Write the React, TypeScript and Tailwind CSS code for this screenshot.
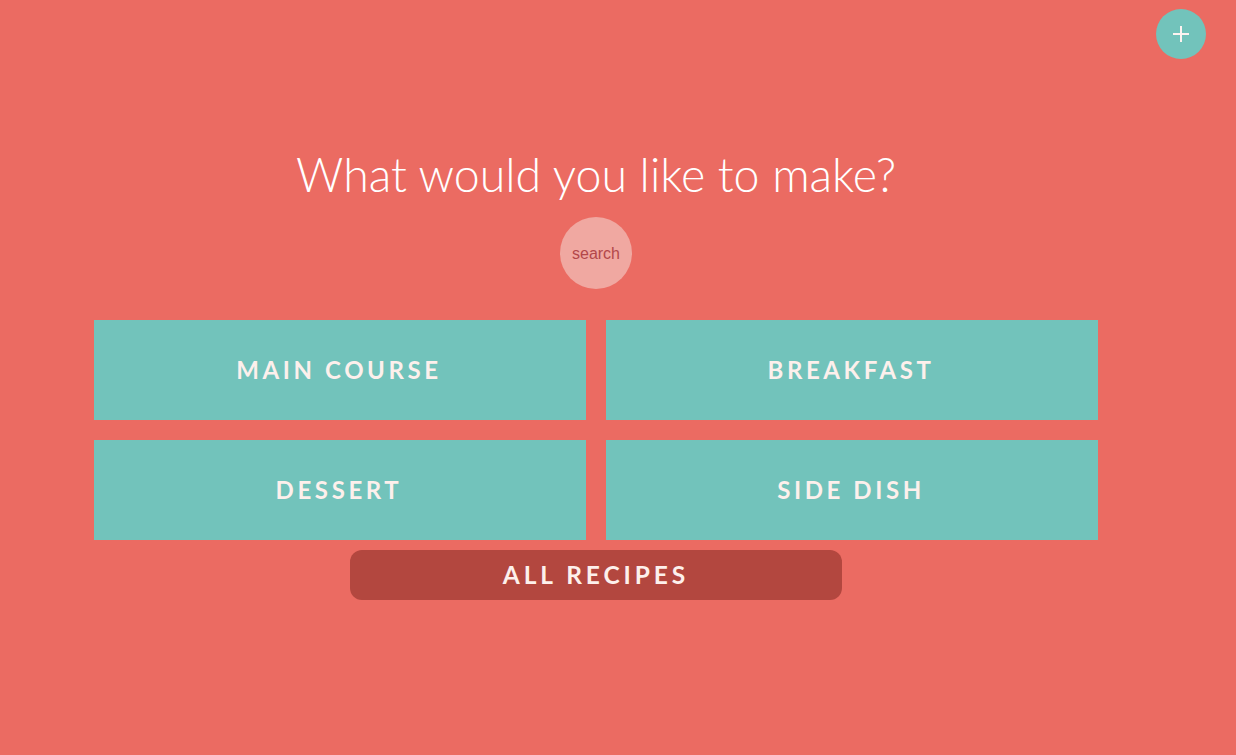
export default function App() {
  const cats = ["MAIN COURSE", "BREAKFAST", "DESSERT", "SIDE DISH"];

  return (
    <div className="relative min-h-[755px] w-full bg-[#eb6b62] font-['Lato',sans-serif]">
      <button className="absolute right-[30px] top-[9px] flex h-[50px] w-[50px] items-center justify-center rounded-full bg-[#72c3bb]">
        <svg width="18" height="18" viewBox="0 0 18 18">
          <path d="M9 1v16M1 9h16" stroke="#fdf3f0" strokeWidth="2" />
        </svg>
      </button>

      <div className="ml-[94px] flex w-[1004px] flex-col items-center">
        <h1 className="mt-[150px] text-[46.5px] font-light leading-[48px] text-white">What would you like to make?</h1>
        <button className="mt-[19px] flex h-[72px] w-[72px] items-center justify-center rounded-full bg-[#f0a8a1] pt-[1px] font-['Liberation_Sans',sans-serif] text-[16px] text-[#b3474a]">
          search
        </button>
        <div className="mt-[31px] grid w-full grid-cols-2 gap-x-[20px] gap-y-[20px]">
          {cats.map((c) => (
            <button key={c} className="flex h-[100px] items-center justify-center bg-[#72c3bb] pr-[2px] text-[24px] font-bold tracking-[0.15em] text-[#fdf0ec]">
              {c}
            </button>
          ))}
        </div>
        <button className="mt-[10px] flex h-[50px] w-[492px] items-center justify-center rounded-[12px] bg-[#b3473f] text-[24.5px] font-bold tracking-[0.16em] text-[#fdf0ec]">
          ALL RECIPES
        </button>
      </div>
    </div>
  );
}
